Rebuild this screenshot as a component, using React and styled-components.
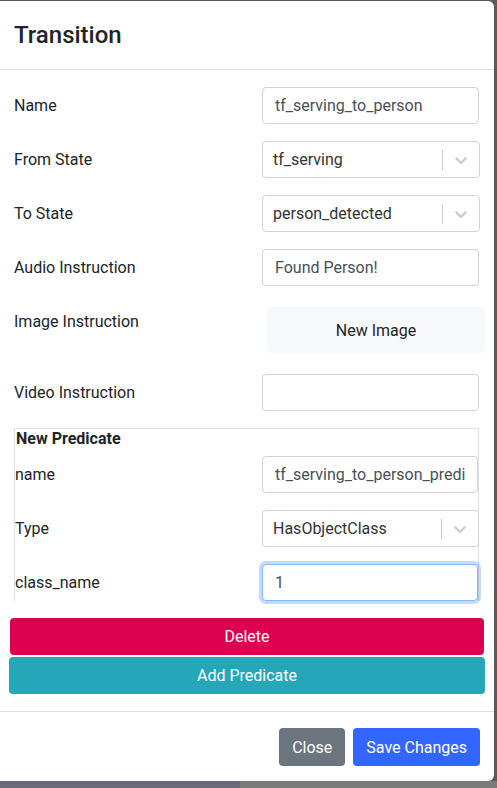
import styled, { createGlobalStyle } from "styled-components";

const GlobalStyle = createGlobalStyle`
    html, body {
        margin: 0;
        padding: 0;
        background: #5a5a5a;
    }
    * {
        box-sizing: border-box;
    }
`;

const Chevron = () => (
    <svg height="20" width="20" viewBox="0 0 20 20" aria-hidden="true" fill="currentColor">
        <path d="M4.516 7.548c0.436-0.446 1.043-0.481 1.576 0l3.908 3.747 3.908-3.747c0.533-0.481 1.141-0.446 1.574 0 0.436 0.445 0.408 1.197 0 1.615-0.406 0.418-4.695 4.502-4.695 4.502-0.217 0.223-0.502 0.335-0.787 0.335s-0.57-0.112-0.789-0.335c0 0-4.287-4.084-4.695-4.502s-0.436-1.17 0-1.615z" />
    </svg>
);

const Select = ({ value }) => (
    <SelectBox>
        <SelectValue>{value}</SelectValue>
        <Separator />
        <Indicator>
            <Chevron />
        </Indicator>
    </SelectBox>
);

const App = () => {
    return (
        <Page>
            <GlobalStyle />
            <Modal>
                <Header>
                    <Title>Transition</Title>
                </Header>
                <Body>
                    <Row>
                        <Label>Name</Label>
                        <Input defaultValue="tf_serving_to_person" />
                    </Row>
                    <Row>
                        <Label>From State</Label>
                        <Select value="tf_serving" />
                    </Row>
                    <Row>
                        <Label>To State</Label>
                        <Select value="person_detected" />
                    </Row>
                    <Row>
                        <Label>Audio Instruction</Label>
                        <Input defaultValue="Found Person!" />
                    </Row>
                    <Row $top>
                        <Label $offset>Image Instruction</Label>
                        <LightButton>New Image</LightButton>
                    </Row>
                    <Row>
                        <Label>Video Instruction</Label>
                        <Input defaultValue="" />
                    </Row>

                    <Predicate>
                        <PredicateTitle>New Predicate</PredicateTitle>
                        <Row $inner>
                            <Label>name</Label>
                            <Input defaultValue="tf_serving_to_person_predi" />
                        </Row>
                        <Row $inner>
                            <Label>Type</Label>
                            <Select value="HasObjectClass" />
                        </Row>
                        <Row $inner>
                            <Label>class_name</Label>
                            <Input defaultValue="1" $focused />
                        </Row>
                    </Predicate>

                    <WideButton $bg="#dc004e" $shift={-4} $width={474}>
                        Delete
                    </WideButton>
                    <WideButton $bg="#26a6b9" $shift={-5} $width={476} $gap={2}>
                        Add Predicate
                    </WideButton>
                </Body>
                <Footer>
                    <FooterButton $bg="#6c757d">Close</FooterButton>
                    <FooterButton $bg="#3366ff">Save Changes</FooterButton>
                </Footer>
            </Modal>
            <Backdrop>
                <BackdropPart $bg="#6d6b7a" $width="240px" />
                <BackdropPart $bg="#7a7a7a" />
            </Backdrop>
        </Page>
    );
};

const Page = styled.div`
    width: 497px;
    height: 788px;
    padding-top: 1px;
    overflow: hidden;
    display: flex;
    flex-direction: column;
    font-family: Roboto, "Liberation Sans", sans-serif;
    color: #212529;
`;

const Modal = styled.div`
    flex: none;
    width: 494px;
    height: 780px;
    background: #fff;
    border-radius: 0 6px 6px 0;
    display: flex;
    flex-direction: column;
`;

const Header = styled.div`
    flex: none;
    height: 69px;
    padding: 0 14px;
    display: flex;
    align-items: center;
    border-bottom: 1px solid #dee2e6;
`;

const Title = styled.h4`
    margin: 0;
    font-size: 24px;
    font-weight: 500;
    line-height: 1.2;
`;

const Body = styled.div`
    flex: 1 1 auto;
    padding: 17px 15px 17px 14px;
`;

const Row = styled.div`
    display: grid;
    grid-template-columns: ${({ $inner }) => ($inner ? "247px 1fr" : "248px 1fr")};
    align-items: ${({ $top }) => ($top ? "start" : "center")};
    padding-top: ${({ $top }) => ($top ? "4px" : "0")};
    margin-bottom: ${({ $top }) => ($top ? "21px" : "17px")};
`;

const Label = styled.label`
    font-size: 16px;
    line-height: 24px;
    padding-top: ${({ $offset }) => ($offset ? "3px" : "0")};
`;

const Input = styled.input`
    height: 37px;
    width: 100%;
    padding: 0 12px;
    font-family: inherit;
    font-size: 16px;
    color: #495057;
    background: #fff;
    border: 1px solid ${({ $focused }) => ($focused ? "#86b7fe" : "#ced4da")};
    border-radius: 4px;
    outline: none;
    box-shadow: ${({ $focused }) => ($focused ? "0 0 0 3px rgba(13, 110, 253, 0.25)" : "none")};
`;

const SelectBox = styled.div`
    height: 37px;
    width: calc(100% + 1px);
    display: flex;
    align-items: center;
    border: 1px solid #d3d3d3;
    border-radius: 4px;
    background: #fff;
`;

const SelectValue = styled.div`
    flex: 1;
    padding: 0 10px;
    font-size: 16px;
    color: #333;
    white-space: nowrap;
`;

const Separator = styled.span`
    width: 1px;
    height: 20px;
    background: #cccccc;
`;

const Indicator = styled.div`
    width: 36px;
    display: flex;
    justify-content: center;
    color: #cccccc;
`;

const LightButton = styled.button`
    width: 218px;
    height: 46px;
    margin-left: 5px;
    border: none;
    border-radius: 4px;
    background: #f8f9fa;
    color: #212529;
    font-family: inherit;
    font-size: 16px;
`;

const Predicate = styled.div`
    border: 1px solid #dee2e6;
    border-bottom: 0;
`;

const PredicateTitle = styled.div`
    font-weight: 700;
    font-size: 16px;
    line-height: 20px;
    padding-left: 1px;
    margin-bottom: 7px;
`;

const WideButton = styled.button`
    display: block;
    width: ${({ $width }) => $width}px;
    height: 37px;
    margin-left: ${({ $shift }) => $shift}px;
    margin-top: ${({ $gap }) => $gap || 0}px;
    border: none;
    border-radius: 4px;
    background: ${({ $bg }) => $bg};
    color: #fff;
    font-family: inherit;
    font-size: 16px;
`;

const Footer = styled.div`
    flex: none;
    border-top: 1px solid #dee2e6;
    padding: 16px 14px 15px;
    display: flex;
    justify-content: flex-end;
    gap: 8px;
`;

const FooterButton = styled.button`
    height: 38px;
    padding: 0 13px;
    border: none;
    border-radius: 4px;
    background: ${({ $bg }) => $bg};
    color: #fff;
    font-family: inherit;
    font-size: 16px;
`;

const Backdrop = styled.div`
    flex: 1;
    display: flex;
`;

const BackdropPart = styled.div`
    background: ${({ $bg }) => $bg};
    width: ${({ $width }) => $width || "auto"};
    flex: ${({ $width }) => ($width ? "none" : "1")};
`;

export default App;
